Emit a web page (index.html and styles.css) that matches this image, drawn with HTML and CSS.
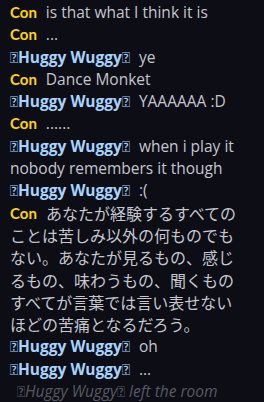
FILE: index.html
```html
<!DOCTYPE html>
<html lang="en">
<head>
  <meta charset="UTF-8" />
  <meta name="viewport" content="width=device-width, initial-scale=1" />
  <title>Chat</title>
  <link rel="stylesheet" href="styles.css">
</head>
<body>
  <div class="chat">
    <p class="msg"><span class="name con">Con</span> is that what I think it is</p>
    <p class="msg"><span class="name con">Con</span> ...</p>
    <p class="msg"><span class="name huggy"><span class="glyph">&#xE000;</span>Huggy Wuggy<span class="glyph">&#xE000;</span></span> ye</p>
    <p class="msg"><span class="name con">Con</span> Dance Monket</p>
    <p class="msg"><span class="name huggy"><span class="glyph">&#xE000;</span>Huggy Wuggy<span class="glyph">&#xE000;</span></span> YAAAAAA :D</p>
    <p class="msg"><span class="name con">Con</span> ......</p>
    <p class="msg"><span class="name huggy"><span class="glyph">&#xE000;</span>Huggy Wuggy<span class="glyph">&#xE000;</span></span> when i play it nobody remembers it though</p>
    <p class="msg"><span class="name huggy"><span class="glyph">&#xE000;</span>Huggy Wuggy<span class="glyph">&#xE000;</span></span> :(</p>
    <p class="msg"><span class="name con">Con</span> <span class="jp">あなたが経験するすべてのことは苦しみ以外の何ものでもない。あなたが見るもの、感じるもの、味わうもの、聞くものすべてが言葉では言い表せないほどの苦痛となるだろう。</span></p>
    <p class="msg"><span class="name huggy"><span class="glyph">&#xE000;</span>Huggy Wuggy<span class="glyph">&#xE000;</span></span> oh</p>
    <p class="msg"><span class="name huggy"><span class="glyph">&#xE000;</span>Huggy Wuggy<span class="glyph">&#xE000;</span></span> ...</p>
    <p class="event"><span class="glyph">&#xE000;</span>Huggy Wuggy<span class="glyph">&#xE000;</span> left the room</p>
  </div>
</body>
</html>
```

FILE: styles.css
```css
body {
  margin: 0;
  background: #0c0d15;
  font-family: "Open Sans", "Noto Sans CJK JP", sans-serif;
  font-size: 15.5px;
  line-height: 22.3px;
  color: #c6c6ce;
}

.chat {
  padding: 1px 18px 0 10px;
}

.msg {
  margin: 0;
}

.name {
  font-weight: bold;
  margin-right: 5px;
}

.con {
  font-family: Lato, sans-serif;
  font-size: 15px;
  color: #ffd600;
  vertical-align: top;
}

.huggy {
  color: #a6d4ff;
}

/* missing-glyph boxes around the name */
.glyph {
  font-family: Lato, sans-serif;
  font-size: 15px;
  font-weight: normal;
  font-style: normal;
  vertical-align: top;
}

.jp {
  font-family: "Noto Sans CJK JP", sans-serif;
  font-size: 16px;
  vertical-align: top;
}

.event {
  margin: 0;
  padding-left: 7px;
  font-style: italic;
  color: #585964;
}
```
